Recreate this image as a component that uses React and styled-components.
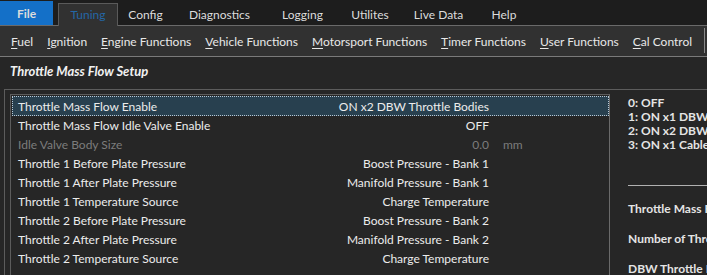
import React from "react";
import styled, { createGlobalStyle } from "styled-components";

const Global = createGlobalStyle`
  html, body { margin: 0; padding: 0; background: #262626; }
  body { font-family: Lato, "Noto Sans", sans-serif; font-size: 12px; color: #e8e8e8; overflow: hidden; }
  * { box-sizing: border-box; }
`;

const Page = styled.div`
  width: 707px;
  height: 275px;
  display: flex;
  flex-direction: column;
  background: #262626;
  overflow: hidden;
`;

const MenuBar = styled.div`
  height: 26px;
  display: flex;
  align-items: flex-end;
  background: #1d1d1d;
  border-bottom: 1px solid #6a6a6a;
`;

const MenuItem = styled.div`
  width: ${(p) => p.$w}px;
  margin-left: ${(p) => p.$ml || 0}px;
  height: ${(p) => (p.$file ? 24 : p.$active ? 23 : 22)}px;
  display: flex;
  align-items: center;
  justify-content: center;
  font-size: 12px;
  color: ${(p) => (p.$active ? "#2467a6" : "#dcdcdc")};
  font-weight: ${(p) => (p.$file ? 700 : 400)};
  background: ${(p) => (p.$file ? "#1470c8" : p.$active ? "#313131" : "transparent")};
  border: ${(p) => (p.$active ? "1px solid #5a5a5a" : "none")};
  border-bottom: none;
  margin-bottom: ${(p) => (p.$active ? -1 : 0)}px;
  padding-bottom: ${(p) => (p.$active ? 1 : 0)}px;
`;

const Toolbar = styled.div`
  height: 31px;
  display: flex;
  align-items: center;
  gap: 14px;
  padding-left: 11px;
  background: #313131;
  border-bottom: 1px solid #7a7a7a;
  position: relative;
`;

const ToolItem = styled.span`
  font-size: 12px;
  color: #e8e8e8;
  white-space: nowrap;
`;

const Key = styled.u`
  text-decoration: underline;
  text-underline-offset: 2px;
`;

const ToolSep = styled.div`
  position: absolute;
  left: 704px;
  top: 2px;
  bottom: 3px;
  width: 1px;
  background: #8a8a8a;
`;

const Title = styled.div`
  height: 32px;
  padding: 0 0 4px 10px;
  display: flex;
  align-items: center;
  font-size: 13px;
  font-weight: 700;
  font-style: italic;
  color: #f2f2f2;
`;

const Frame = styled.div`
  flex: 1;
  margin-left: 4px;
  border-top: 1px solid #5c5c5c;
  border-left: 1px solid #5c5c5c;
  padding: 4px 0 0 5px;
  display: flex;
  min-height: 0;
`;

const List = styled.div`
  width: 600px;
  border-top: 1px solid #5c5c5c;
  border-left: 1px solid #5c5c5c;
  border-right: 1px solid #6a6a6a;
  padding: 1px 0 0 1px;
  display: flex;
  flex-direction: column;
`;

const Row = styled.div`
  height: 19px;
  display: grid;
  grid-template-columns: 1fr 180px 120px;
  align-items: center;
  padding-left: 6px;
  width: 597px;
  background: ${(p) => (p.$selected ? "#28404f" : "transparent")};
  outline: ${(p) => (p.$selected ? "1px dotted #b8c8d6" : "none")};
  outline-offset: -1px;
  color: ${(p) => (p.$disabled ? "#7c7c7c" : "#ececec")};
  ${(p) => (p.$selected ? "height: 20px;" : "")}
`;

const Label = styled.span`
  white-space: nowrap;
`;

const Value = styled.span`
  text-align: right;
  white-space: nowrap;
`;

const Unit = styled.span`
  padding-left: 14px;
  color: #7c7c7c;
`;

const Side = styled.div`
  flex: 1;
  padding: 2px 0 0 18px;
  overflow: hidden;
  font-weight: 700;
  color: #e4e4e4;
  white-space: nowrap;
`;

const Option = styled.div`
  height: 14px;
  line-height: 14px;
`;

const Rule = styled.div`
  margin-top: 33px;
  height: 1px;
  background: #b0b0b0;
`;

const Help = styled.div`
  height: 29.5px;
  line-height: 14px;
  padding-top: ${(p) => (p.$first ? 16 : 8)}px;
  ${(p) => (p.$first ? "height: 38px;" : "")}
`;

const menus = [
  { t: "File", w: 53, file: true },
  { t: "Tuning", w: 60, active: true, ml: 5 },
  { t: "Config", w: 55 },
  { t: "Diagnostics", w: 93 },
  { t: "Logging", w: 73 },
  { t: "Utilites", w: 62 },
  { t: "Live Data", w: 75 },
  { t: "Help", w: 56 },
];

const tools = [
  "Fuel",
  "Ignition",
  "Engine Functions",
  "Vehicle Functions",
  "Motorsport Functions",
  "Timer Functions",
  "User Functions",
  "Cal Control",
];

const rows = [
  { l: "Throttle Mass Flow Enable", v: "ON x2 DBW Throttle Bodies", sel: true },
  { l: "Throttle Mass Flow Idle Valve Enable", v: "OFF" },
  { l: "Idle Valve Body Size", v: "0.0", u: "mm", dis: true },
  { l: "Throttle 1 Before Plate Pressure", v: "Boost Pressure - Bank 1" },
  { l: "Throttle 1 After Plate Pressure", v: "Manifold Pressure - Bank 1" },
  { l: "Throttle 1 Temperature Source", v: "Charge Temperature" },
  { l: "Throttle 2 Before Plate Pressure", v: "Boost Pressure - Bank 2" },
  { l: "Throttle 2 After Plate Pressure", v: "Manifold Pressure - Bank 2" },
  { l: "Throttle 2 Temperature Source", v: "Charge Temperature" },
];

export default function App() {
  return (
    <Page>
      <Global />
      <MenuBar>
        {menus.map((m) => (
          <MenuItem key={m.t} $w={m.w} $ml={m.ml} $file={m.file} $active={m.active}>
            {m.t}
          </MenuItem>
        ))}
      </MenuBar>
      <Toolbar>
        {tools.map((t) => (
          <ToolItem key={t}>
            <Key>{t[0]}</Key>
            {t.slice(1)}
          </ToolItem>
        ))}
        <ToolSep />
      </Toolbar>
      <Title>Throttle Mass Flow Setup</Title>
      <Frame>
        <List>
          {rows.map((r) => (
            <Row key={r.l} $selected={r.sel} $disabled={r.dis}>
              <Label>{r.l}</Label>
              <Value>{r.v}</Value>
              <Unit>{r.u || ""}</Unit>
            </Row>
          ))}
        </List>
        <Side>
          <Option>0: OFF</Option>
          <Option>1: ON x1 DBW Throttle Body</Option>
          <Option>2: ON x2 DBW Throttle Bodies</Option>
          <Option>3: ON x1 Cable Throttle</Option>
          <Rule />
          <Help $first>Throttle Mass Flow Enable</Help>
          <Help>Number of Throttle Bodies</Help>
          <Help>DBW Throttle Bodies</Help>
        </Side>
      </Frame>
    </Page>
  );
}
